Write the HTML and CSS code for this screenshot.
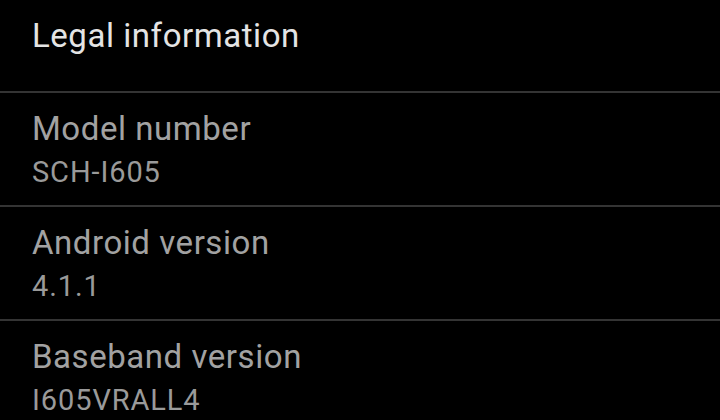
FILE: index.html
```html
<!DOCTYPE html>
<html lang="en">
<head>
	<meta charset="UTF-8">
	<title>About phone</title>
	<link rel="stylesheet" href="styles.css">
</head>
<body>
	<div class="list">
		<div class="item item-single">
			<div class="title title-on">Legal information</div>
		</div>
		<div class="item">
			<div class="title">Model number</div>
			<div class="summary">SCH-I605</div>
		</div>
		<div class="item">
			<div class="title">Android version</div>
			<div class="summary">4.1.1</div>
		</div>
		<div class="item">
			<div class="title">Baseband version</div>
			<div class="summary">I605VRALL4</div>
		</div>
	</div>
</body>
</html>
```

FILE: styles.css
```css
*{
	margin: 0;
	padding: 0;
}
body{
	background: #000;
	font-family: Roboto, "Noto Sans", sans-serif;
	overflow: hidden;
}
.list{
	width: 720px;
}
.item{
	display: flex;
	flex-direction: column;
	gap: 6px;
	padding: 16px 32px;
	border-bottom: 2px solid #343434;
}
.item-single{
	padding-bottom: 35px;
}
.title{
	font-size: 33px;
	line-height: 40px;
	letter-spacing: 0.55px;
	color: #a2a2a2;
}
.title-on{
	color: #e4e4e4;
}
.summary{
	font-size: 29px;
	line-height: 34px;
	letter-spacing: 0.9px;
	color: #9a9a9a;
}
```
